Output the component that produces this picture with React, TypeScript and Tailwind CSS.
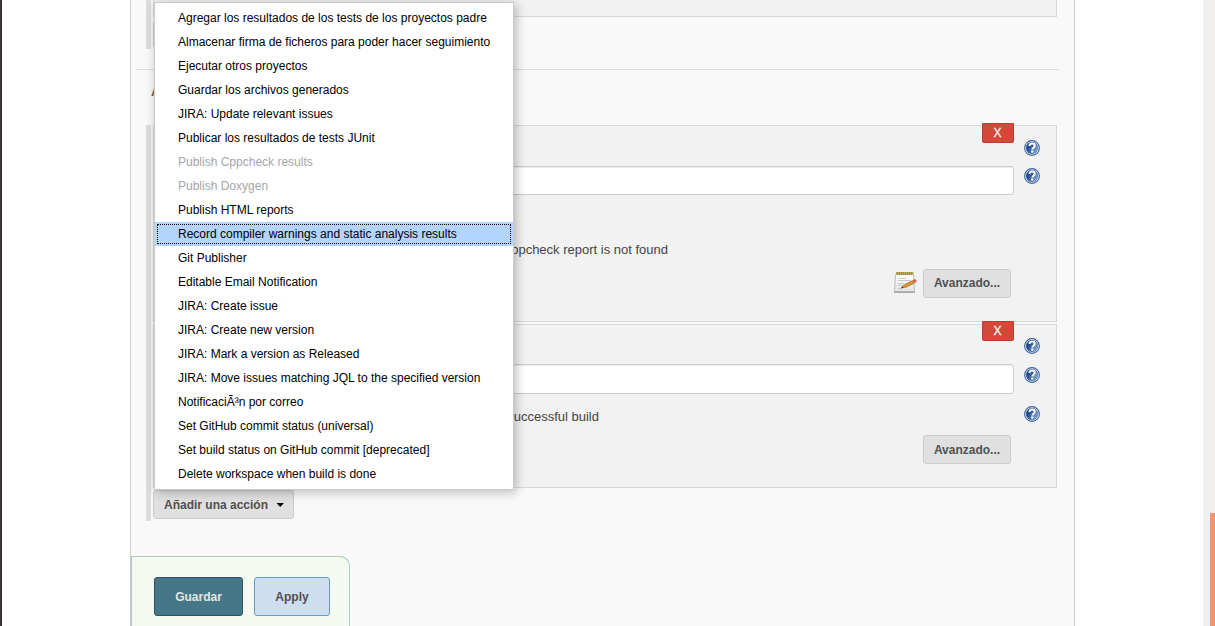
import React from "react";

type Item = { label: string; disabled?: boolean; active?: boolean };

const items: Item[] = [
  { label: "Agregar los resultados de los tests de los proyectos padre" },
  { label: "Almacenar firma de ficheros para poder hacer seguimiento" },
  { label: "Ejecutar otros proyectos" },
  { label: "Guardar los archivos generados" },
  { label: "JIRA: Update relevant issues" },
  { label: "Publicar los resultados de tests JUnit" },
  { label: "Publish Cppcheck results", disabled: true },
  { label: "Publish Doxygen", disabled: true },
  { label: "Publish HTML reports" },
  { label: "Record compiler warnings and static analysis results", active: true },
  { label: "Git Publisher" },
  { label: "Editable Email Notification" },
  { label: "JIRA: Create issue" },
  { label: "JIRA: Create new version" },
  { label: "JIRA: Mark a version as Released" },
  { label: "JIRA: Move issues matching JQL to the specified version" },
  { label: "NotificaciÃ³n por correo" },
  { label: "Set GitHub commit status (universal)" },
  { label: "Set build status on GitHub commit [deprecated]" },
  { label: "Delete workspace when build is done" },
];

function HelpIcon() {
  return (
    <svg width="16" height="16" viewBox="0 0 16 16" className="block shrink-0">
      <defs>
        <linearGradient id="help-fill" x1="0" y1="0.2" x2="1" y2="0.8">
          <stop offset="0.25" stopColor="#20488a" />
          <stop offset="1" stopColor="#8fb2dc" />
        </linearGradient>
      </defs>
      <circle cx="8" cy="8" r="7.4" fill="#fff" stroke="#3a62a0" strokeWidth="1.1" />
      <circle cx="8" cy="8" r="5.9" fill="url(#help-fill)" stroke="#2f5797" strokeWidth="0.5" />
      <path
        d="M5.5 6.100C5.5 4.300 6.700 3.600 8.100 3.600s2.600.8 2.600 2.200c0 1.900-2.300 1.900-2.300 3.700"
        fill="none"
        stroke="#fff"
        strokeWidth="2"
      />
      <rect x="7.2" y="10.5" width="2.2" height="2.1" fill="#fff" />
    </svg>
  );
}

function NotepadIcon() {
  return (
    <svg width="24" height="24" viewBox="0 0 24 24" className="relative top-[2px] block shrink-0">
      <defs>
        <linearGradient id="paper" x1="0" y1="0" x2="0" y2="1">
          <stop offset="0" stopColor="#fff" />
          <stop offset="1" stopColor="#e2e2e2" />
        </linearGradient>
      </defs>
      <path d="M2.5 3.5h18l1 17.5h-20z" fill="url(#paper)" stroke="#b5b5b5" strokeWidth="0.9" />
      <path d="M1.2 20.4h20.6v1.4H1.2z" fill="#a0a0a0" />
      <path d="M5 7.5h8M5 9.5h13M5 12.500h6M5 14.500h12M5 17.500h5" stroke="#c4c4c4" strokeWidth="0.9" />
      <path d="M3 1h17.500v3H3z" fill="#b9ad59" />
      <path d="M4.500 1v3M6.500 1v3M8.500 1v3M10.500 1v3M12.500 1v3M14.500 1v3M16.500 1v3M18.500 1v3" stroke="#8a8344" strokeWidth="0.8" />
      <path d="M8.500 16.800l3.200-3.300 8.100-3.900 1.500 2.500-8.400 4.100z" fill="#dc9a35" stroke="#99641f" strokeWidth="0.700" />
      <path d="M19.500 9.300l2.500-1.200 1.700 1.300-.5 1.700-2 1z" fill="#df6250" />
      <path d="M7.900 17.300l1.700-1.800.9 1.300z" fill="#333" />
    </svg>
  );
}

function DeleteButton() {
  return (
    <button className="relative -top-[3px] h-5 w-8 rounded-b-[2px] border border-[#c03a30] bg-[#d24939] pr-px text-center text-[12px] leading-[18px] text-[#fbf3f2] [-webkit-text-stroke:0.3px_#fbf3f2]">
      X
    </button>
  );
}

function Advanced({ low = false }: { low?: boolean }) {
  return (
    <button
      className={
        (low ? "pt-px" : "") +
        " h-[29px] w-[88px] rounded-[3px] border border-[#cccccc] bg-[#e0e0e0] text-[12px] leading-[27px] font-bold text-[#505050]"
      }
    >
      Avanzado...
    </button>
  );
}

function Field({ tall = false }: { tall?: boolean }) {
  return (
    <div
      className={
        (tall ? "h-[30px]" : "h-[29px]") +
        " w-[850px] rounded-[3px] border border-[#cccccc] bg-white shadow-[inset_0_1px_1px_rgba(0,0,0,0.075)]"
      }
    />
  );
}

export default function App() {
  return (
    <div
      className="relative flex h-[626px] w-[1215px] overflow-hidden bg-white text-[13px] text-[#444444]"
      style={{ fontFamily: '"Liberation Sans", Arial, sans-serif' }}
    >
      <div className="w-[2px] bg-[#3b322f]" />
      <main className="ml-32 flex w-[945px] flex-col border-x border-[#cccccc] bg-[#f9f9f9]">
        <div className="flex h-[49px] gap-[2px] pl-[15px]">
          <div className="w-[5px] bg-[#dddddd]" />
          <div className="flex w-[904px] flex-col gap-[3px]">
            <div className="h-[17px] border-x border-b border-[#d8d8d8] bg-[#f2f2f2]" />
            <div className="h-[28px] w-[141px] rounded-[3px] border border-[#cccccc] bg-[#e0e0e0]" />
          </div>
        </div>
        <div className="mt-5 ml-[5px] h-px w-[923px] bg-[#dcdcdc]" />
        <div className="h-[55px] pt-[14px] pl-5 text-[13px] leading-[16px] font-bold text-[#7d5c48]">A</div>

        <div className="flex h-[396px] gap-[2px] pl-[15px]">
          <div className="w-[5px] bg-[#dddddd]" />
          <div className="flex w-[904px] flex-col">
            <section className="flex h-[197px] border border-[#d8d8d8] bg-[#f2f2f2]">
              <div className="flex w-[860px] flex-col">
                <div className="flex h-10 justify-end">
                  <DeleteButton />
                </div>
                <div className="flex justify-end"><Field /></div>
                <div className="mt-[47px] w-[514px] text-right leading-4">ppcheck report is not found</div>
                <div className="mt-[11px] flex justify-end gap-[6px] pr-[3px]">
                  <NotepadIcon />
                  <Advanced />
                </div>
              </div>
              <div className="flex flex-col gap-3 pt-[14px] pl-[10px]">
                <HelpIcon />
                <HelpIcon />
              </div>
            </section>
            <section className="mt-[2px] flex h-[164px] border border-[#d8d8d8] bg-[#f2f2f2]">
              <div className="flex w-[860px] flex-col">
                <div className="flex h-[39px] justify-end">
                  <div className="relative -top-px"><DeleteButton /></div>
                </div>
                <div className="flex justify-end"><Field tall /></div>
                <div className="mt-[15px] w-[445px] text-right leading-4">uccessful build</div>
                <div className="mt-[10px] flex justify-end pr-[3px]">
                  <Advanced low />
                </div>
              </div>
              <div className="flex flex-col pt-[13px] pl-[10px]">
                <HelpIcon />
                <div className="mt-[13px]"><HelpIcon /></div>
                <div className="mt-[23px]"><HelpIcon /></div>
              </div>
            </section>
            <button className="mt-[2px] flex h-[29px] w-[141px] items-center gap-[8px] rounded-[3px] border border-[#cccccc] bg-[#e0e0e0] pl-[10px] text-[12px] font-bold text-[#505050]">
              <span>Añadir una acción</span>
              <svg width="8" height="4" viewBox="0 0 8 4"><path d="M0.500 0h7.500L4.250 4z" fill="#000" /></svg>
            </button>
          </div>
        </div>

        <footer className="mt-[35px] flex h-[70px] w-[219px] gap-[11px] rounded-tr-[10px] border-x border-t border-[#a7cfb9] bg-[#f5f9f1] pt-5 pl-[22px] text-[12px] font-bold">
          <button className="h-[39px] w-[89px] rounded-[3px] border border-[#2b5365] bg-[#457788] text-[#e6e6e6]">
            Guardar
          </button>
          <button className="h-[39px] w-[76px] rounded-[3px] border border-[#6699cc] bg-[#cddeee] text-[#505050]">
            Apply
          </button>
        </footer>
      </main>

      <div className="ml-auto flex w-3 items-end justify-end bg-[#f1f0ee]">
        <div className="h-[113px] w-[5px] bg-[#f29470]" />
      </div>

      <ul className="absolute top-[2px] left-[154px] w-[360px] border border-[#cccccc] bg-white py-[3px] text-[12px] leading-6 text-black shadow-[2px_2px_10px_rgba(0,0,0,0.28)]">
        {items.map((item) => (
          <li
            key={item.label}
            className={
              "relative h-6 pl-[23px] whitespace-nowrap " +
              (item.disabled ? "text-[#a6a6a6]" : item.active ? "bg-[#b3d4ff]" : "")
            }
          >
            {item.label}
            {item.active && (
              <span className="absolute top-[2px] right-[2px] bottom-[2px] left-[2px] border border-dotted border-black" />
            )}
          </li>
        ))}
      </ul>
    </div>
  );
}
